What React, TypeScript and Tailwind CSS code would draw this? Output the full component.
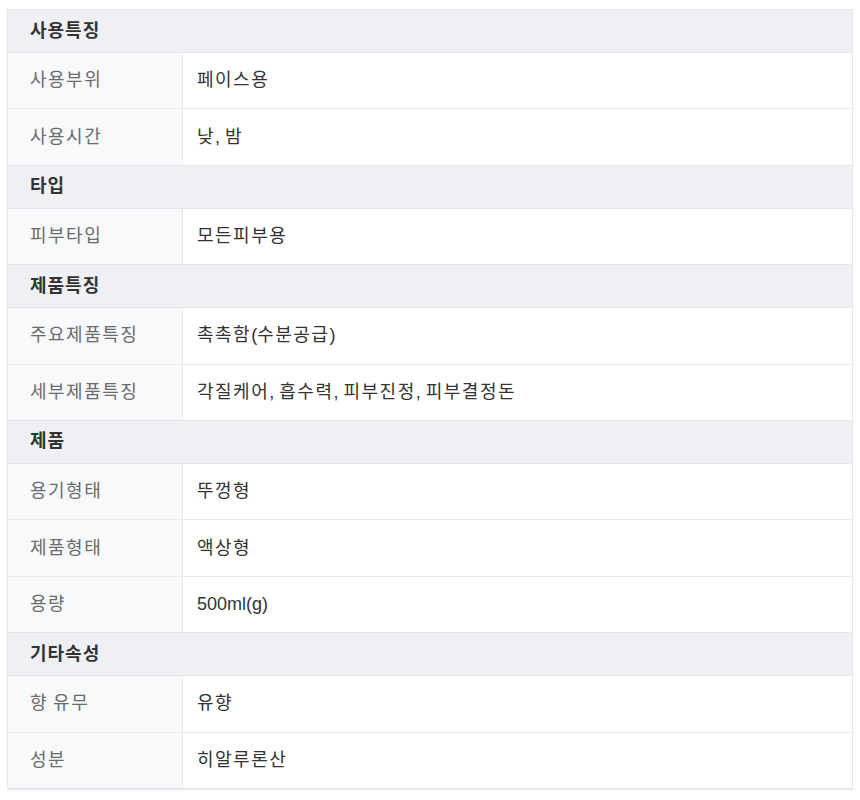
const sections: { title: string; rows: [string, string][] }[] = [
  { title: "사용특징", rows: [["사용부위", "페이스용"], ["사용시간", "낮, 밤"]] },
  { title: "타입", rows: [["피부타입", "모든피부용"]] },
  {
    title: "제품특징",
    rows: [
      ["주요제품특징", "촉촉함(수분공급)"],
      ["세부제품특징", "각질케어, 흡수력, 피부진정, 피부결정돈"],
    ],
  },
  {
    title: "제품",
    rows: [["용기형태", "뚜껑형"], ["제품형태", "액상형"], ["용량", "500ml(g)"]],
  },
  { title: "기타속성", rows: [["향 유무", "유향"], ["성분", "히알루론산"]] },
];

// hangul in the source font runs a bit wider, so space those runs out
function Txt({ text, wide }: { text: string; wide: string }) {
  return (
    <span>
      {text.split(/([가-힣]+)/).map((part, i) =>
        /[가-힣]/.test(part) ? (
          <span key={i} className={wide}>
            {part}
          </span>
        ) : (
          part
        )
      )}
    </span>
  );
}

export default function App() {
  return (
    <div
      className="bg-white w-[860px] h-[800px] pt-[9px] pl-[7px]"
      style={{ fontFamily: '"Liberation Sans", "Noto Sans CJK KR", sans-serif' }}
    >
      <div className="w-[846px] border border-[#e3e6ea] text-[18px]">
        {sections.map((s) => (
          <div key={s.title}>
            <div className="h-[43px] flex items-center pl-[22px] bg-[#eef0f4] border-b border-[#e3e6ea] font-bold text-[#333]">
              <Txt text={s.title} wide="tracking-[1px]" />
            </div>
            {s.rows.map(([k, v]) => (
              <div key={k} className="h-[56.4px] flex border-b border-[#e8eaee] last:border-b-[#e3e6ea]">
                <div className="w-[175px] shrink-0 flex items-center pl-[22px] bg-[#f8f9fb] border-r border-[#e8eaee] text-[#6b6b6b]">
                  <Txt text={k} wide="tracking-[1.5px]" />
                </div>
                <div className="flex-1 flex items-center pl-[14px] text-[#333]">
                  <Txt text={v} wide="tracking-[1.5px]" />
                </div>
              </div>
            ))}
          </div>
        ))}
      </div>
    </div>
  );
}
